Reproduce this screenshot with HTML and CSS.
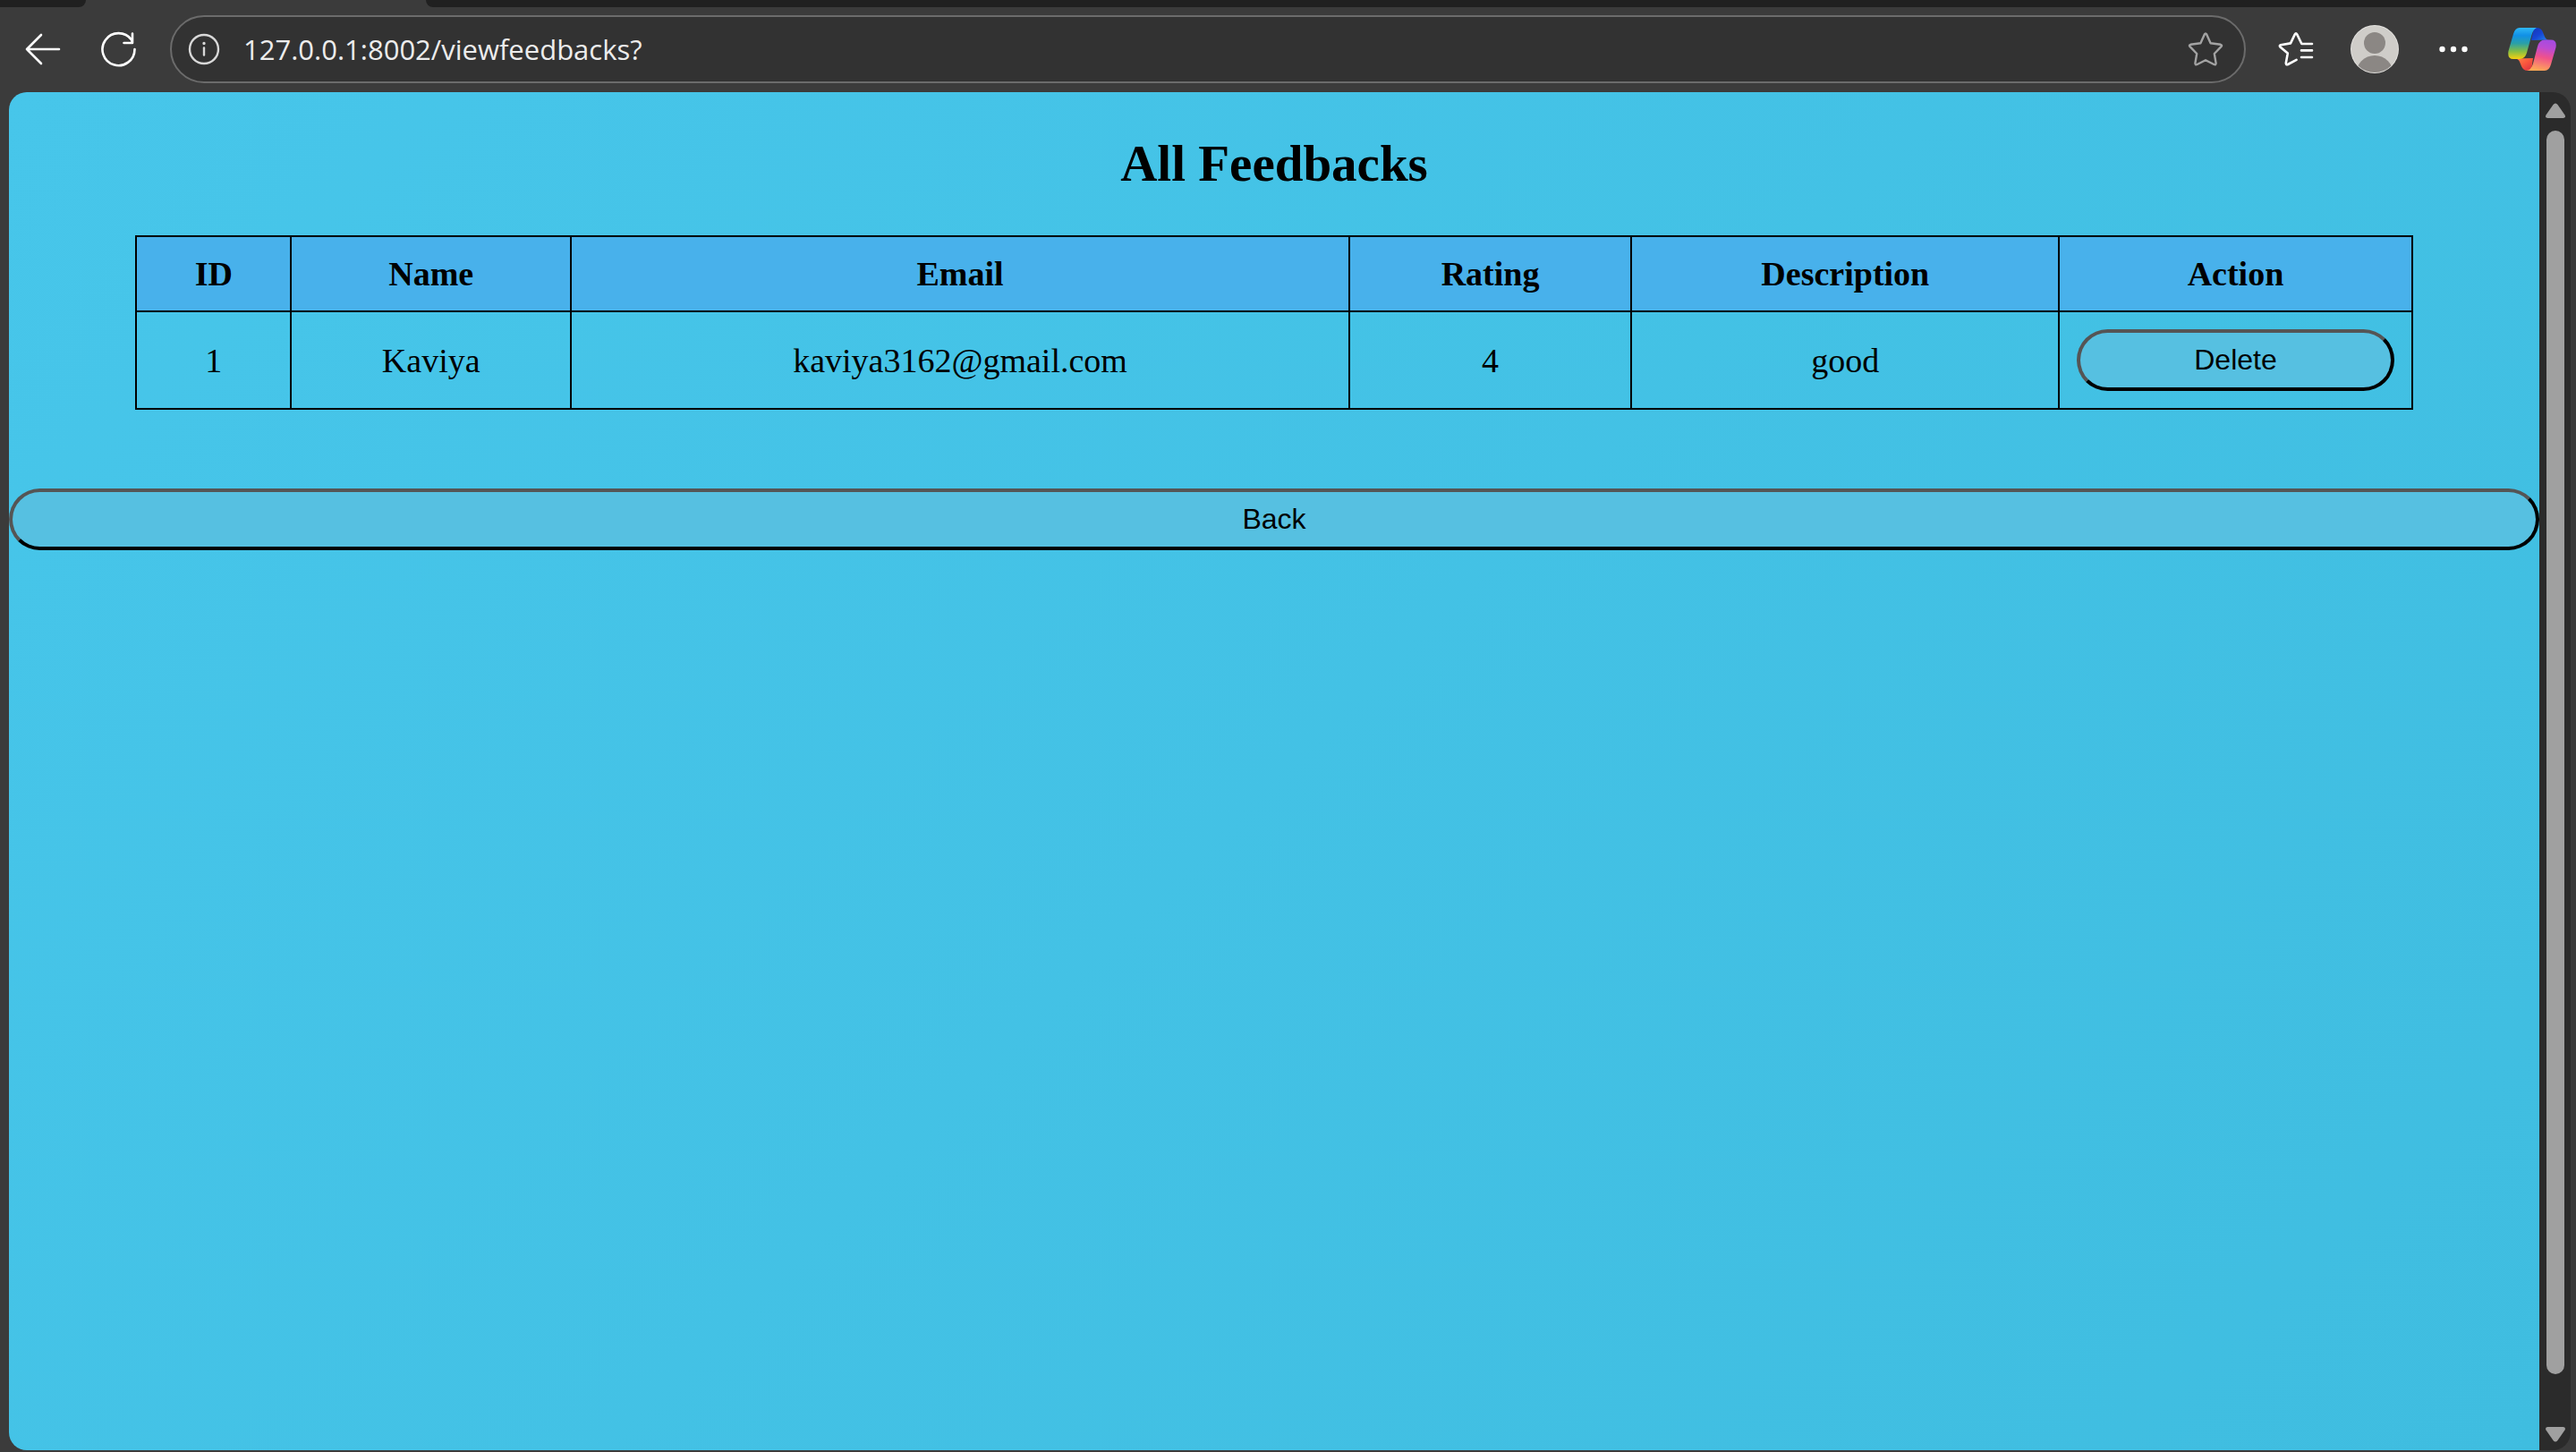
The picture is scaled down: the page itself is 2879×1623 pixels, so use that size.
FILE: index.html
```html
<!DOCTYPE html>
<html lang="en">
<head>
<meta charset="utf-8">
<meta name="viewport" content="width=device-width, initial-scale=1">
<title>All Feedbacks</title>
<link rel="stylesheet" href="styles.css">
</head>
<body>
<div class="browser">
  <div class="tabs">
    <div class="tab-before"></div>
    <div class="tab-active"></div>
    <div class="tab-after"></div>
  </div>
  <header class="toolbar">
    <div class="navigation">
      <button class="tool" type="button" aria-label="Back to previous page">
        <svg width="40" height="40" viewBox="0 0 40 40" fill="none" stroke="#fff" stroke-width="2.6" stroke-linecap="round" stroke-linejoin="round"><path d="M38 20H2M18 4L2 20l16 16"/></svg>
      </button>
      <button class="tool" type="button" aria-label="Refresh">
        <svg width="40" height="40" viewBox="0 0 40 40" fill="none" stroke="#fff" stroke-width="2.6" stroke-linecap="round" stroke-linejoin="round"><path d="M38.500 20A18 18 0 1 1 35 9.500L36 12.500M36 2.500V13H26.500"/></svg>
      </button>
    </div>
    <div class="address">
      <svg width="36" height="36" viewBox="0 0 36 36" fill="none" stroke="#d8d8d8" stroke-width="2.400" stroke-linecap="round"><circle cx="18" cy="18" r="16"/><path d="M18 16.500v8"/><circle cx="18" cy="11.500" r="1" fill="#d8d8d8" stroke-width="1.400"/></svg>
      <input class="url" type="text" aria-label="Address" value="127.0.0.1:8002/viewfeedbacks?">
      <button class="star" type="button" aria-label="Add to favorites">
        <svg width="40" height="40" viewBox="0 0 40 40" fill="none" stroke="#a3a3a3" stroke-width="2.400" stroke-linejoin="round"><path d="M18.800 3.400Q20 1.400 21.200 3.400L25.600 13.200 36.800 14.800Q39 15.400 37.400 17.200L29.800 25 31.600 35.600Q31.600 38 29.400 37L20 32.200 10.600 37Q8.400 38 8.400 35.600L10.200 25 2.600 17.200Q1 15.400 3.200 14.800L14.400 13.200Z"/></svg>
      </button>
    </div>
    <div class="actions">
      <button class="tool" type="button" aria-label="Favorites">
        <svg width="40" height="40" viewBox="0 0 40 40" fill="none" stroke="#fff" stroke-width="2.600" stroke-linecap="round" stroke-linejoin="round"><path d="M38 14H26.400L21.200 3.400Q20 1.400 18.800 3.400L14 13.400 3 15.200Q1 15.800 2.400 17.400L10.800 24.600 8.800 35.600Q8.800 38 11 37L20.600 31.800M26 21.400H38M26 29H38"/></svg>
      </button>
      <button class="tool" type="button" aria-label="Profile">
        <svg width="56" height="56" viewBox="0 0 56 56"><defs><clipPath id="face"><circle cx="28" cy="28" r="26"/></clipPath></defs><circle cx="28" cy="28" r="27" fill="#e3e2df"/><circle cx="28" cy="28" r="26" fill="#cfcdc9"/><g clip-path="url(#face)" fill="#8b8784"><circle cx="28" cy="21" r="12"/><circle cx="28" cy="56" r="21"/></g></svg>
      </button>
      <button class="tool" type="button" aria-label="Settings and more">
        <svg width="32" height="32" viewBox="0 0 32 32" fill="#fff"><circle cx="3.500" cy="16" r="3.200"/><circle cx="16" cy="16" r="3.200"/><circle cx="28.500" cy="16" r="3.200"/></svg>
      </button>
      <button class="tool" type="button" aria-label="Copilot">
        <svg width="54" height="50" viewBox="0 0 54 50">
          <defs>
            <linearGradient id="a" x1="0" y1="0" x2="0" y2="1"><stop offset="0" stop-color="#2fb7f5"/><stop offset=".25" stop-color="#1090e6"/><stop offset=".5" stop-color="#2aa0a8"/><stop offset=".75" stop-color="#83bd46"/><stop offset="1" stop-color="#f7d00f"/></linearGradient>
            <linearGradient id="b" x1="0" y1="0" x2="1" y2="1"><stop offset="0" stop-color="#1635b4"/><stop offset=".5" stop-color="#1645d4"/><stop offset="1" stop-color="#2388ed"/></linearGradient>
            <linearGradient id="c" x1=".6" y1="0" x2=".4" y2="1"><stop offset="0" stop-color="#a64be0"/><stop offset=".25" stop-color="#bd4bd2"/><stop offset=".55" stop-color="#f0518b"/><stop offset="1" stop-color="#ffaa55"/></linearGradient>
            <linearGradient id="d" x1="0" y1="0" x2="1" y2="1"><stop offset="0" stop-color="#ff8748"/><stop offset=".5" stop-color="#f9563d"/><stop offset="1" stop-color="#d92c45"/></linearGradient>
          </defs>
          <path fill="url(#b)" d="M29 1h3Q37 1 39 6l2 5q1.500 3.500 5 3.500L26 15Z"/>
          <path fill="url(#d)" d="M26 49h-4Q17 49 15 44l-2-5q-1.500-3.500-5-3.500L28 35Z"/>
          <path fill="url(#a)" d="M13 1h19Q28 3 26.500 9L21 29q-2 7-8 7H6Q-1 36 .500 27L6 8Q8 1 13 1Z"/>
          <path fill="url(#c)" d="M41 49H21q5-1 7-8l5-19q2-7.500 8-7.500h7Q55 14.500 53.500 23L48 42q-2 7-7 7Z"/>
        </svg>
      </button>
    </div>
  </header>
  <div class="viewport">
    <main class="page">
      <h2 class="title">All Feedbacks</h2>
      <table class="feedbacks">
        <colgroup><col class="col-id"><col class="col-name"><col class="col-email"><col class="col-rating"><col class="col-description"><col class="col-action"></colgroup>
        <thead>
          <tr><th>ID</th><th>Name</th><th>Email</th><th>Rating</th><th>Description</th><th>Action</th></tr>
        </thead>
        <tbody>
          <tr><td>1</td><td>Kaviya</td><td>kaviya3162@gmail.com</td><td>4</td><td>good</td><td><button class="pill" type="button">Delete</button></td></tr>
        </tbody>
      </table>
      <button class="pill" type="button">Back</button>
    </main>
    <div class="scrollbar">
      <svg width="22" height="18" viewBox="0 0 22 18" fill="#a0a0a0"><path d="M8.500 2Q11-1 13.500 2L21.500 13.500Q23 17 19.500 17H2.500Q-1 17 .500 13.500Z"/></svg>
      <div class="thumb"></div>
      <svg width="22" height="18" viewBox="0 0 22 18" fill="#a0a0a0"><path d="M8.500 16Q11 19 13.500 16L21.500 4.500Q23 1 19.500 1H2.500Q-1 1 .500 4.500Z"/></svg>
    </div>
  </div>
</div>
</body>
</html>
```
FILE: styles.css
```css
* { box-sizing: border-box; }

body {
  margin: 0;
  background: #3b3b3b;
  color: #000;
  font-family: "Liberation Serif", "Times New Roman", serif;
}

button { font: inherit; cursor: pointer; }
svg { display: block; flex: none; }

.browser {
  display: flex;
  flex-direction: column;
  min-height: 100vh;
}

/* Bottom edge of the tab strip */
.tabs {
  display: flex;
  height: 8px;
  background: #3b3b3b;
}
.tab-before { width: 96px; background: #202020; border-bottom-right-radius: 8px; }
.tab-active { width: 380px; }
.tab-after { flex: 1; background: #202020; border-bottom-left-radius: 8px; }

.toolbar {
  display: flex;
  align-items: center;
  height: 95px;
  padding: 0 5px 2px 6px;
}
.navigation, .actions { display: flex; align-items: center; }
.tool, .star {
  display: flex;
  justify-content: center;
  padding: 0;
  border: 0;
  background: none;
}
.navigation .tool { width: 84px; }
.actions .tool { width: 88px; }
.address {
  flex: 1;
  display: flex;
  align-items: center;
  gap: 26px;
  height: 76px;
  margin: 0 12px 0 16px;
  padding: 0 23px 0 18px;
  border: 2px solid #6b6b6b;
  border-radius: 38px;
  background: #323232;
}
.url {
  flex: 1;
  min-width: 0;
  padding: 0;
  border: 0;
  outline: 0;
  background: none;
  color: #ececec;
  font: 31px/44px "Open Sans", "Segoe UI", sans-serif;
}

.viewport {
  flex: 1;
  display: flex;
  margin: 0 6px 2px 10px;
  border-radius: 20px;
  overflow: hidden;
}
.page {
  flex: 1;
  min-width: 0;
  background: linear-gradient(135deg, #47c6ea, #3fbde0);
}
.title {
  margin: 47px 0;
  font-size: 57px;
  line-height: 66px;
  text-align: center;
}

.feedbacks {
  width: 90%;
  margin: 0 auto 88px;
  border-collapse: collapse;
  table-layout: fixed;
  font-size: 38px;
  line-height: 44px;
  text-align: center;
}
.feedbacks th, .feedbacks td { padding: 19px; border: 2px solid #000; }
.feedbacks th { background: #48b1eb; }
.col-id { width: 6.8%; }
.col-name { width: 12.3%; }
.col-email { width: 34.2%; }
.col-rating { width: 12.4%; }
.col-description { width: 18.8%; }
.col-action { width: 15.5%; }

.pill {
  display: block;
  width: 100%;
  padding: 12px;
  border: 4px solid;
  border-color: #555 #000 #000 #555;
  border-radius: 36px;
  background: #56c0e1;
  color: #000;
  font: 32px/37px "Liberation Sans", Arial, sans-serif;
}

.scrollbar {
  display: flex;
  flex-direction: column;
  align-items: center;
  width: 35px;
  padding: 12px 0 9px;
  background: #2b2b2b;
}
.thumb {
  flex: 1;
  width: 20px;
  margin: 13px 0 58px;
  border-radius: 10px;
  background: #a0a0a0;
}
```
